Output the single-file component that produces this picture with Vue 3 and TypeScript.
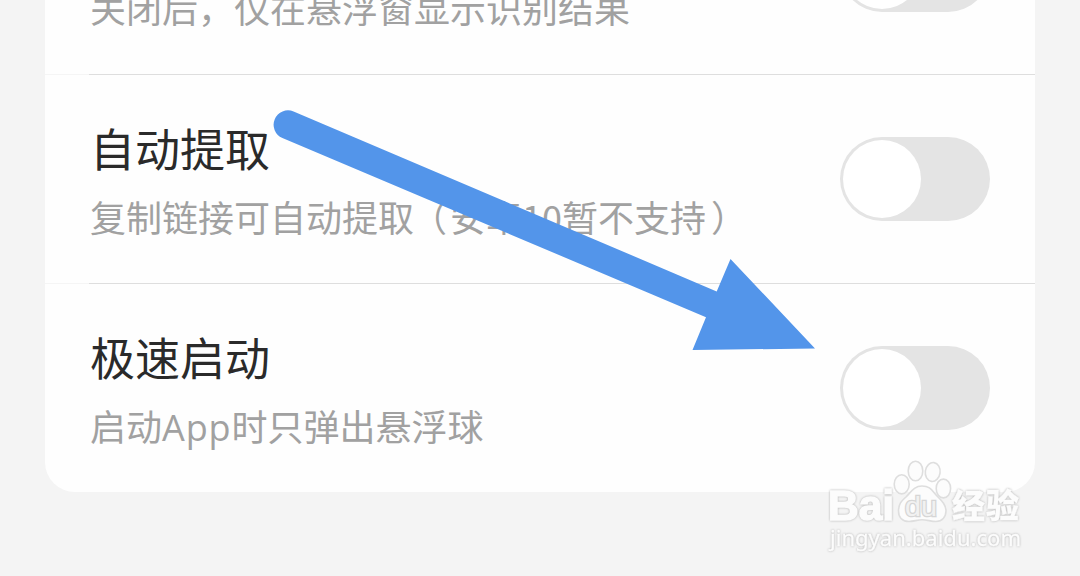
<script setup lang="ts">
interface Part {
  text: string
  kind?: 'latin' | 'open' | 'close'
}
interface Setting {
  title: string
  parts: Part[]
}

const settings: Setting[] = [
  { title: '', parts: [{ text: '关闭后，仅在悬浮窗显示识别结果' }] },
  {
    title: '自动提取',
    parts: [
      { text: '复制链接可自动提取' },
      { text: '（', kind: 'open' },
      { text: '安卓10暂不支持' },
      { text: '）', kind: 'close' },
    ],
  },
  { title: '极速启动', parts: [{ text: '启动' }, { text: 'App', kind: 'latin' }, { text: '时只弹出悬浮球' }] },
]
</script>

<template>
  <main class="screen">
    <section class="card">
      <div v-for="(item, i) in settings" :key="i" class="row">
        <div class="copy">
          <div class="title">{{ item.title }}</div>
          <div class="desc"><span v-for="(part, j) in item.parts" :key="j" :class="part.kind">{{ part.text }}</span></div>
        </div>
        <div class="switch"><div class="knob"></div></div>
      </div>
    </section>

    <svg class="arrow" width="1080" height="576" viewBox="0 0 1080 576">
      <path d="M293.6 111.5 L716.7 291.4 L730.5 259 L815 348.5 L692.5 350 L706 317.2 L282.4 138 A14.3 14.3 0 0 1 293.6 111.5 Z" fill="#5395ea" />
    </svg>

    <svg class="watermark" width="220" height="110" viewBox="820 455 220 110">
      <text class="brand" x="828" y="520" textLength="66" lengthAdjust="spacingAndGlyphs">Bai</text>
      <g class="paw">
        <ellipse cx="901.7" cy="484.3" rx="7.5" ry="9.6" />
        <ellipse cx="915.5" cy="471" rx="7.3" ry="9.8" />
        <ellipse cx="932.7" cy="472" rx="7.4" ry="9.5" transform="rotate(8 932.7 472)" />
        <ellipse cx="943.4" cy="488.5" rx="7.2" ry="9.4" />
        <path d="M922 486 C914 486 911 492 906 497 C901 501.5 898.5 504 898.5 511 C898.5 518 903 521.5 909 521.5 C914 521.5 917 519.8 922 519.8 C927 519.8 931 521.5 936 521.5 C942 521.5 946 517 946 511 C946 505 942 501 938 497 C932 491 931 486 922 486 Z" />
      </g>
      <text class="du" x="905" y="515.5" textLength="32" lengthAdjust="spacingAndGlyphs">du</text>
      <text class="cn" x="952" y="517.5" textLength="67">经验</text>
      <text class="url" x="830" y="546" textLength="191" lengthAdjust="spacingAndGlyphs">jingyan.baidu.com</text>
    </svg>
  </main>
</template>

<style>
body {
  margin: 0;
  overflow: hidden;
  background: #f4f4f4;
}
</style>

<style scoped>
.screen {
  position: relative;
  box-sizing: border-box;
  width: 1080px;
  height: 576px;
  padding: 0 45px;
  overflow: hidden;
  background: #f4f4f4;
  font-family: "Noto Sans CJK SC", sans-serif;
}
.card {
  margin-top: -134px;
  border-radius: 0 0 30px 30px;
  background: #fefefe;
}
.row {
  display: flex;
  align-items: center;
  justify-content: space-between;
  height: 208px;
  padding: 0 45px;
}
.row + .row {
  border-top: 1px solid;
  border-image: linear-gradient(to right, #f5f5f5 45px, #dedede 45px) 1;
}
.copy {
  box-sizing: border-box;
  height: 208px;
  padding-top: 40px;
  white-space: nowrap;
}
.title {
  height: 66px;
  color: #2a2a2a;
  font-size: 45px;
  line-height: 66px;
}
.desc {
  height: 54px;
  margin-top: 8px;
  color: #a1a1a1;
  font-size: 36px;
  line-height: 54px;
}
.latin {
  font-family: "Open Sans", sans-serif;
  letter-spacing: 0.9px;
}
.open {
  margin: 0 3px 0 -3px;
}
.close {
  margin-left: 5px;
}
.switch {
  box-sizing: border-box;
  width: 150px;
  height: 84px;
  padding: 3px;
  border-radius: 42px;
  background: #e4e4e4;
}
.knob {
  width: 78px;
  height: 78px;
  border-radius: 50%;
  background: #fff;
}
.arrow {
  position: absolute;
  top: 0;
  left: 0;
}
.watermark {
  position: absolute;
  top: 455px;
  left: 820px;
  fill: #fcfcfc;
}
.paw {
  stroke: #dedede;
  stroke-width: 1.6px;
}
.brand,
.cn,
.url {
  stroke: #fcfcfc;
  filter: drop-shadow(0 0 1px #b0b0b0);
}
.brand {
  font: 700 43px "Liberation Sans", sans-serif;
  stroke-width: 1.6px;
}
.du {
  font: 400 28px "Liberation Sans", sans-serif;
  fill: #f1f1f1;
  stroke: #d6d6d6;
  stroke-width: 2.6px;
  paint-order: stroke;
}
.cn {
  font: 900 33px "Noto Sans CJK SC", sans-serif;
  stroke-width: 0.3px;
}
.url {
  font: 400 22px "Noto Sans", sans-serif;
  stroke-width: 0.3px;
}
</style>
